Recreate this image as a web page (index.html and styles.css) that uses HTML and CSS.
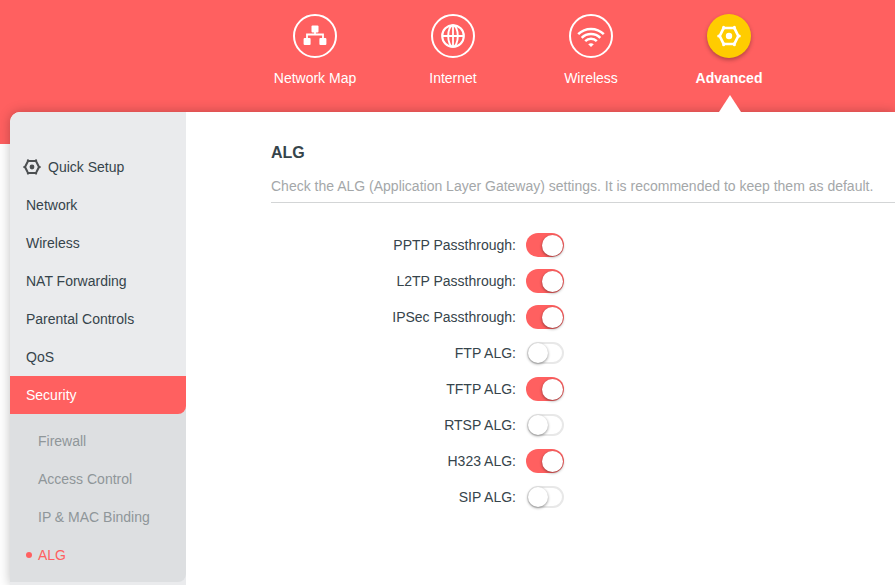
FILE: index.html
```
<!DOCTYPE html>
<html lang="en">

<head>
    <meta charset="UTF-8">
    <meta name="viewport" content="width=device-width, initial-scale=1.0">
    <title>ALG</title>
    <link rel="stylesheet" href="styles.css">
</head>

<body>
    <svg width="0" height="0" class="defs">
        <symbol id="gear" viewBox="0 0 24 24">
            <path d="M8 4h8q1.2 0 1.8 1l3 6q.5 1 0 2l-3 6q-.6 1-1.8 1H8q-1.2 0-1.8-1l-3-6q-.5-1 0-2l3-6Q6.800 4 8 4z" fill="none" stroke="currentColor" stroke-width="2.7" />
            <circle cx="12" cy="12" r="3.2" fill="currentColor" />
            <g fill="currentColor">
                <circle cx="6.600" cy="3.300" r="1.500" />
                <circle cx="17.400" cy="3.300" r="1.500" />
                <circle cx="1.700" cy="12" r="1.500" />
                <circle cx="22.300" cy="12" r="1.500" />
                <circle cx="6.600" cy="20.700" r="1.500" />
                <circle cx="17.400" cy="20.700" r="1.500" />
            </g>
        </symbol>
    </svg>

    <header class="header">
        <nav class="top-nav">
            <a class="nav-item">
                <span class="nav-icon">
                    <svg width="40" height="40" viewBox="0 0 40 40" fill="#fff">
                        <rect x="16.5" y="9.5" width="7" height="7" rx="1" />
                        <rect x="8.6" y="22" width="7" height="7" rx="1" />
                        <rect x="24.4" y="22" width="7" height="7" rx="1" />
                        <path d="M20 15v4M12 23v-4.5h16V23" fill="none" stroke="#fff" stroke-width="1.8" />
                    </svg>
                </span>
                <span>Network Map</span>
            </a>
            <a class="nav-item">
                <span class="nav-icon">
                    <svg width="40" height="40" viewBox="0 0 40 40" fill="none" stroke="#fff" stroke-width="2.1">
                        <circle cx="20" cy="20" r="10.8" />
                        <ellipse cx="20" cy="20" rx="4.8" ry="10.8" stroke-width="1.9" />
                        <path d="M20 9v22M9 20h22" stroke-width="1.8" />
                    </svg>
                </span>
                <span>Internet</span>
            </a>
            <a class="nav-item">
                <span class="nav-icon">
                    <svg width="40" height="40" viewBox="0 0 40 40" fill="none" stroke="#fff" stroke-width="2.5">
                        <path d="M7.2 18.2a18.2 18.2 0 0 1 25.6 0M10.7 21.8a13.2 13.2 0 0 1 18.6 0M14.2 25.2a8.2 8.2 0 0 1 11.6 0" />
                        <path d="M17.2 28.2q2.8-2 5.6 0L20 31z" fill="#fff" stroke="none" />
                    </svg>
                </span>
                <span>Wireless</span>
            </a>
            <a class="nav-item active">
                <span class="nav-icon">
                    <svg width="24" height="24"><use href="#gear" /></svg>
                </span>
                <span>Advanced</span>
            </a>
        </nav>
    </header>

    <div class="panel">
        <aside class="sidebar">
            <a class="menu-item quick">
                <svg width="18" height="18"><use href="#gear" /></svg>
                <span>Quick Setup</span>
            </a>
            <a class="menu-item">Network</a>
            <a class="menu-item">Wireless</a>
            <a class="menu-item">NAT Forwarding</a>
            <a class="menu-item">Parental Controls</a>
            <a class="menu-item">QoS</a>
            <div class="menu-group">
                <a class="menu-item selected">Security</a>
                <div class="submenu">
                    <a class="sub-item">Firewall</a>
                    <a class="sub-item">Access Control</a>
                    <a class="sub-item">IP &amp; MAC Binding</a>
                    <a class="sub-item current">ALG</a>
                </div>
            </div>
        </aside>

        <main class="content">
            <h1>ALG</h1>
            <p class="description">Check the ALG (Application Layer Gateway) settings. It is recommended to keep them as default.</p>
            <div class="settings">
                <div class="row"><label>PPTP Passthrough:</label><span class="toggle on"></span></div>
                <div class="row"><label>L2TP Passthrough:</label><span class="toggle on"></span></div>
                <div class="row"><label>IPSec Passthrough:</label><span class="toggle on"></span></div>
                <div class="row"><label>FTP ALG:</label><span class="toggle"></span></div>
                <div class="row"><label>TFTP ALG:</label><span class="toggle on"></span></div>
                <div class="row"><label>RTSP ALG:</label><span class="toggle"></span></div>
                <div class="row"><label>H323 ALG:</label><span class="toggle on"></span></div>
                <div class="row"><label>SIP ALG:</label><span class="toggle"></span></div>
            </div>
        </main>
    </div>
</body>

</html>
```
FILE: styles.css
```
*,
*::before,
*::after {
    box-sizing: border-box;
}

body {
    margin: 0;
    height: 585px;
    overflow: hidden;
    background: #fff;
    color: #36444b;
    font-family: Arial, "Liberation Sans", sans-serif;
    font-size: 14px;
}

.defs {
    position: absolute;
}

/* Top bar */
.header {
    height: 144px;
    padding: 14px 0 0 246px;
    background: #ff6060;
}

.top-nav {
    display: flex;
}

.nav-item {
    display: flex;
    flex-direction: column;
    align-items: center;
    gap: 12px;
    position: relative;
    width: 138px;
    height: 98px;
    color: #fff;
    line-height: 16px;
}

.nav-icon {
    display: flex;
    align-items: center;
    justify-content: center;
    width: 44px;
    height: 44px;
    border: 2px solid #fff;
    border-radius: 50%;
}

.nav-item.active {
    z-index: 2;
    font-weight: bold;
}

.active .nav-icon {
    border: none;
    background: #fc0;
    box-shadow: 0 2px 4px rgba(0, 0, 0, 0.3);
}

.nav-item.active::after {
    content: "";
    position: absolute;
    bottom: 0;
    left: 59px;
    border: solid transparent;
    border-width: 0 11px 17px;
    border-bottom-color: #fff;
}

/* Main panel */
.panel {
    display: flex;
    position: relative;
    height: 473px;
    margin: -32px 0 0 10px;
    border-radius: 10px 0 0 0;
    background: #fff;
    box-shadow: 0 0 12px rgba(0, 0, 0, 0.25);
}

.sidebar {
    width: 176px;
    padding-top: 36px;
    border-radius: 10px 0 0 0;
    background: #eaebed;
}

.menu-item {
    display: block;
    height: 38px;
    padding-left: 16px;
    line-height: 38px;
}

.menu-item.quick {
    display: flex;
    align-items: center;
    gap: 7px;
    padding-left: 13px;
}

.quick svg {
    color: #4c4f51;
}

.menu-group {
    border-bottom-right-radius: 8px;
    background: #dddfe1;
}

.menu-item.selected {
    border-bottom-right-radius: 8px;
    background: #ff6060;
    color: #fff;
}

.submenu {
    padding: 8px 0;
}

.sub-item {
    display: flex;
    align-items: center;
    height: 38px;
    padding-left: 28px;
    color: #8f9699;
}

.sub-item.current {
    gap: 6px;
    padding-left: 16px;
    color: #ff6060;
}

.sub-item.current::before {
    content: "";
    width: 6px;
    height: 6px;
    border-radius: 50%;
    background: #ff6060;
}

.content {
    flex: 1;
    padding: 31px 0 0 85px;
}

h1 {
    margin: 0;
    font-size: 16px;
    line-height: 20px;
}

.description {
    margin: 0;
    padding: 15px 0 8px;
    border-bottom: 1px solid #d3d5d6;
    color: #a4a7a9;
    line-height: 16px;
    white-space: nowrap;
}

/* Toggle rows */
.settings {
    padding-top: 24px;
}

.row {
    display: flex;
    align-items: center;
    gap: 10px;
    height: 36px;
}

.row label {
    width: 245px;
    text-align: right;
}

.toggle {
    display: flex;
    align-items: center;
    width: 38px;
    height: 24px;
    padding: 1px;
    border-radius: 12px;
}

.toggle::before {
    content: "";
    flex: none;
    width: 37px;
    height: 22px;
    border: 2px solid #e8e8e8;
    border-radius: 11px;
}

.toggle::after {
    content: "";
    flex: none;
    width: 20px;
    height: 20px;
    margin-left: -36px;
    border-radius: 50%;
    background: #fff;
    box-shadow: 0 1px 3px rgba(0, 0, 0, 0.45);
}

.toggle.on {
    justify-content: flex-end;
    background: #ff6060;
}

.toggle.on::before {
    display: none;
}

.toggle.on::after {
    width: 21px;
    height: 21px;
    margin: 0;
}
```
